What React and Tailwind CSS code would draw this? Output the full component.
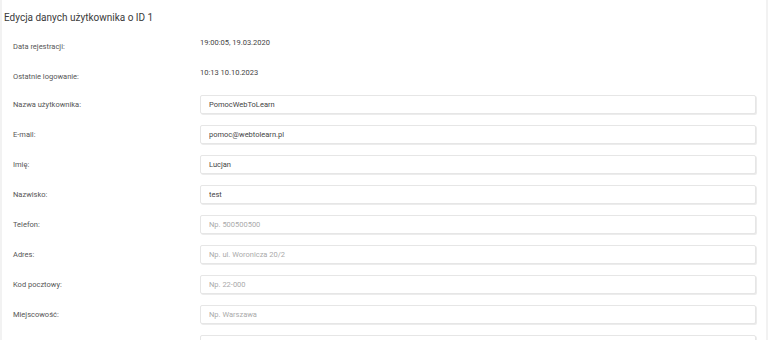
const info = [
  { label: 'Data rejestracji:', value: '19:00:05, 19.03.2020' },
  { label: 'Ostatnie logowanie:', value: '10:13 10.10.2023' },
]

const fields = [
  { label: 'Nazwa użytkownika:', value: 'PomocWebToLearn' },
  { label: 'E-mail:', value: 'pomoc@webtolearn.pl' },
  { label: 'Imię:', value: 'Lucjan' },
  { label: 'Nazwisko:', value: 'test' },
  { label: 'Telefon:', placeholder: 'Np. 500500500' },
  { label: 'Adres:', placeholder: 'Np. ul. Woronicza 20/2' },
  { label: 'Kod pocztowy:', placeholder: 'Np. 22-000' },
  { label: 'Miejscowość:', placeholder: 'Np. Warszawa' },
  { label: '', placeholder: '' },
]

export default function App() {
  return (
    <div className="h-[340px] overflow-hidden bg-[#f2f2f2] px-[2px] font-['Roboto',sans-serif]">
      <div className="min-h-[340px] bg-white">
        <h1 className="px-[2px] pt-[11px] text-[10px] leading-[14px] text-[#3a3a3a]">
          Edycja danych użytkownika o ID 1
        </h1>
        <div className="mt-[10px] pl-[11px] pr-[10px]">
          {info.map(row => (
            <div key={row.label} className="flex h-[30px]">
              <div className="mt-[2px] flex h-[19px] w-[187px] items-center text-[7.5px] text-[#555]">{row.label}</div>
              <div className="-mt-[2px] flex h-[19px] flex-1 items-center text-[7.5px] text-[#444]">{row.value}</div>
            </div>
          ))}
          {fields.map((row, i) => (
            <div key={i} className="flex h-[30px]">
              <div className="flex h-[19px] w-[187px] items-center text-[7.5px] text-[#555]">{row.label}</div>
              <input
                readOnly
                defaultValue={row.value}
                placeholder={row.placeholder}
                className="h-[19px] flex-1 rounded-[2px] border border-[#e6e6e6] bg-white px-[8px] text-[7.5px] text-[#444] shadow-[1px_1px_0_#ececec] outline-none placeholder:text-[#aaa]"
              />
            </div>
          ))}
        </div>
      </div>
    </div>
  )
}
